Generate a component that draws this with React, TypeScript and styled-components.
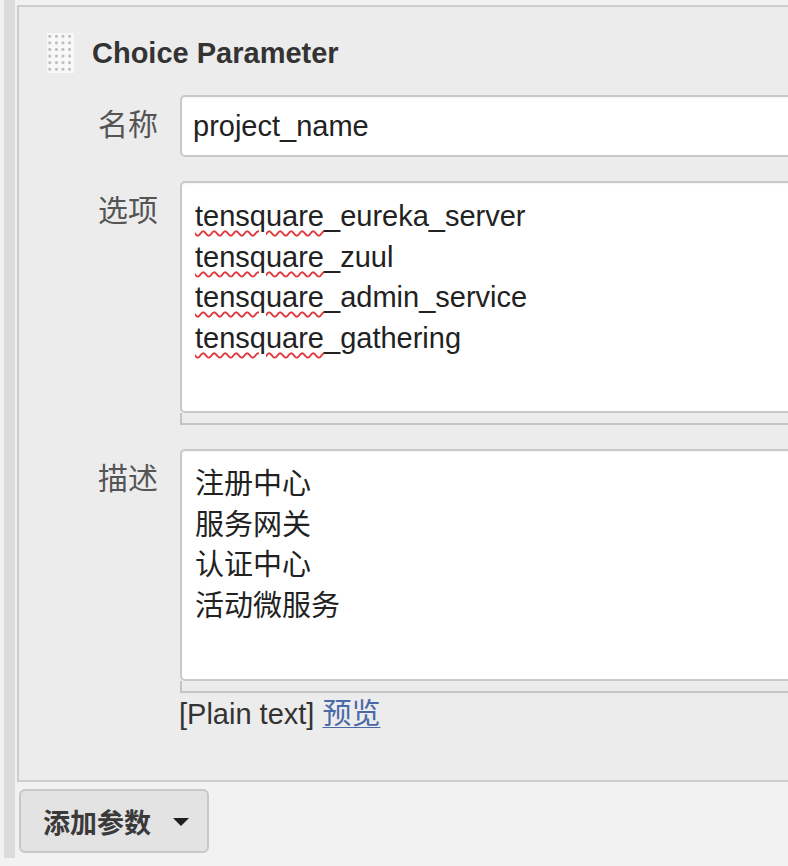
import React from "react";
import styled, { createGlobalStyle } from "styled-components";

const GlobalStyle = createGlobalStyle`
  html, body {
    margin: 0;
    padding: 0;
    background: #f2f2f2;
    overflow: hidden;
  }
  body {
    font-family: "Liberation Sans", Arial, "Noto Sans CJK SC", sans-serif;
  }
`;

const Page = styled.div`
  padding-left: 4px;
  width: 820px;
`;

const Container = styled.div`
  border-left: 11px solid #dbdbdb;
  padding: 5px 0 5px 2px;
`;

const Panel = styled.div`
  background: #ececec;
  border: 2px solid #cdcdcd;
  border-right: none;
  padding: 26px 0 46px 0;
`;

const Header = styled.div`
  display: flex;
  align-items: center;
  gap: 18px;
  padding-left: 28px;
`;

const DragHandle = styled.div`
  width: 27px;
  height: 40px;
  background-color: #f8f8f8;
  background-image: radial-gradient(circle, #b9b9b9 1.1px, transparent 1.7px);
  background-size: 6.6px 6.6px;
  background-position: -0.5px 0;
`;

const Title = styled.div`
  font-size: 29px;
  font-weight: bold;
  color: #333;
  line-height: 40px;
`;

const FormGrid = styled.div`
  display: grid;
  grid-template-columns: 139px 1fr;
  column-gap: 22px;
  row-gap: 24px;
  margin-top: 22px;
`;

const Label = styled.div`
  text-align: right;
  font-family: "Liberation Sans", "Noto Sans CJK SC", sans-serif;
  font-size: 30px;
  line-height: 40px;
  color: #555;
  padding-top: 10px;
`;

const TextInput = styled.div`
  height: 58px;
  box-sizing: content-box;
  border: 2px solid #c9c9c9;
  border-radius: 5px;
  background: #fff;
  display: flex;
  align-items: center;
  padding-left: 11px;
  font-size: 29px;
  color: #222;
  box-shadow: inset 0 1px 2px rgba(0, 0, 0, 0.06);
`;

const FieldStack = styled.div`
  display: flex;
  flex-direction: column;
`;

const TextBox = styled.div<{ $height: number }>`
  height: ${(p) => p.$height}px;
  box-sizing: border-box;
  border: 2px solid #c9c9c9;
  border-radius: 5px 0 0 5px;
  background: #fff;
  padding: 13px 12px 0 13px;
  font-family: "Liberation Sans", "Noto Sans CJK SC", sans-serif;
  font-size: 29px;
  line-height: 40.6px;
  color: #222;
  box-shadow: inset 0 1px 2px rgba(0, 0, 0, 0.06);
`;

const Line = styled.div`
  white-space: nowrap;
`;

const Misspelled = styled.span`
  text-decoration: underline wavy #e0393e;
  text-decoration-thickness: 1.5px;
  text-underline-offset: 4px;
`;

const ResizeHandle = styled.div`
  height: 10px;
  border-left: 2px solid #c4c4c4;
  border-bottom: 2px solid #c4c4c4;
  background: #ececec;
`;

const HelpLine = styled.div`
  font-family: "Liberation Sans", "Noto Sans CJK SC", sans-serif;
  font-size: 29px;
  line-height: 40px;
  color: #333;
  margin-left: -1px;
  padding-top: 1px;
`;

const PreviewLink = styled.a`
  color: #4a69a8;
  text-decoration: underline;
  text-underline-offset: 3px;
  text-decoration-thickness: 1px;
`;

const ButtonRow = styled.div`
  margin-top: 7px;
  padding-left: 2px;
`;

const AddButton = styled.button`
  display: inline-flex;
  align-items: center;
  gap: 22px;
  height: 64px;
  width: 190px;
  box-sizing: border-box;
  padding: 0 0 0 22px;
  background: #e3e3e3;
  border: 2px solid #c8c8c8;
  border-radius: 6px;
  font-family: "Liberation Sans", "Noto Sans CJK SC", sans-serif;
  font-size: 27px;
  font-weight: bold;
  color: #3a3a3a;
`;

const Caret = styled.span`
  width: 0;
  height: 0;
  border-left: 8px solid transparent;
  border-right: 8px solid transparent;
  border-top: 8px solid #1e1e1e;
  margin-top: 2px;
`;

const options = [
  "eureka_server",
  "zuul",
  "admin_service",
  "gathering",
];

const descriptions = ["注册中心", "服务网关", "认证中心", "活动微服务"];

export default function App() {
  return (
    <>
      <GlobalStyle />
      <Page>
        <Container>
          <Panel>
            <Header>
              <DragHandle />
              <Title>Choice Parameter</Title>
            </Header>
            <FormGrid>
              <Label>名称</Label>
              <TextInput>project_name</TextInput>

              <Label>选项</Label>
              <FieldStack>
                <TextBox $height={232}>
                  {options.map((o) => (
                    <Line key={o}>
                      <Misspelled>tensquare</Misspelled>_{o}
                    </Line>
                  ))}
                </TextBox>
                <ResizeHandle />
              </FieldStack>

              <Label>描述</Label>
              <FieldStack>
                <TextBox $height={232}>
                  {descriptions.map((d) => (
                    <Line key={d}>{d}</Line>
                  ))}
                </TextBox>
                <ResizeHandle />
                <HelpLine>
                  [Plain text] <PreviewLink href="#">预览</PreviewLink>
                </HelpLine>
              </FieldStack>
            </FormGrid>
          </Panel>
          <ButtonRow>
            <AddButton>
              添加参数
              <Caret />
            </AddButton>
          </ButtonRow>
        </Container>
      </Page>
    </>
  );
}
